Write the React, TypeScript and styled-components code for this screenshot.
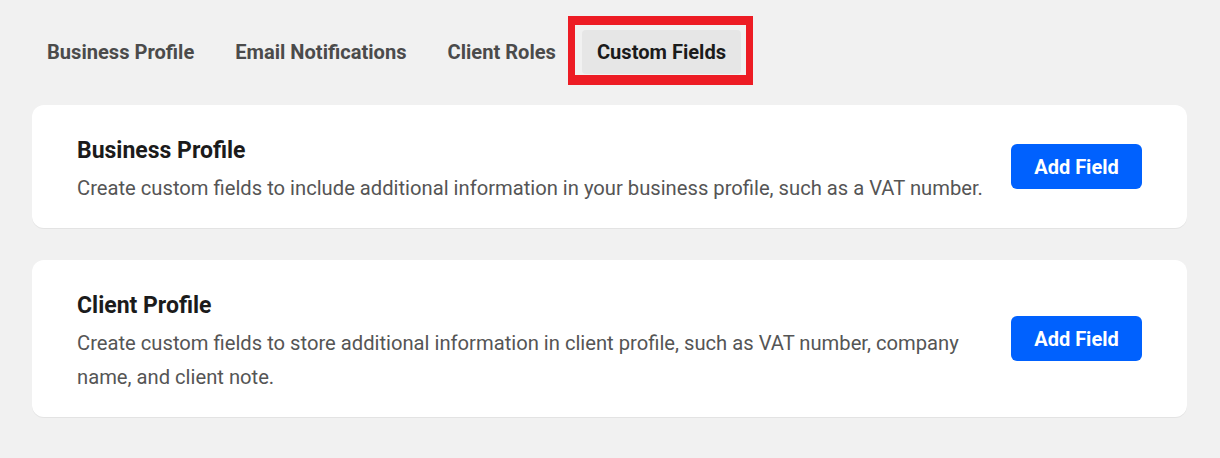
import React from "react";
import styled, { createGlobalStyle } from "styled-components";

const GlobalStyle = createGlobalStyle`
  html, body { margin: 0; padding: 0; background: #f1f1f1; }
  body { font-family: Roboto, "Noto Sans", "Liberation Sans", sans-serif; -webkit-font-smoothing: antialiased; }
  * { box-sizing: border-box; }
`;

const Page = styled.div`
  padding: 30px 33px 40px 32px;
  display: flex;
  flex-direction: column;
`;

const Tabs = styled.nav`
  display: flex;
  gap: 11px;
  margin-bottom: 31px;
`;

const Tab = styled.button<{ $active?: boolean }>`
  position: relative;
  height: 44px;
  padding: 0 15px;
  border: none;
  border-radius: 4px;
  background: ${(p) => (p.$active ? "#e6e6e6" : "transparent")};
  color: ${(p) => (p.$active ? "#1b1b1b" : "#4b4b4b")};
  font-family: Roboto, "Noto Sans", sans-serif;
  font-size: 20.1px;
  font-weight: 700;
  cursor: pointer;
`;

const Highlight = styled.span`
  position: absolute;
  left: -14px;
  right: -12px;
  top: -14px;
  bottom: -11px;
  border: solid #ed1c24;
  border-width: 9px 7px 10px 7px;
  pointer-events: none;
`;

const Cards = styled.div`
  display: flex;
  flex-direction: column;
  gap: 32px;
`;

const Card = styled.section`
  background: #ffffff;
  border-radius: 12px;
  box-shadow: 0 1px 0 #e3e3e3;
  padding: 30px 45px 23px 45px;
  display: flex;
  align-items: center;
  gap: 28px;
`;

const CardBody = styled.div`
  flex: 1;
  min-width: 0;
  display: flex;
  flex-direction: column;
  gap: 6px;
`;

const Title = styled.h2`
  margin: 0;
  font-size: 23px;
  line-height: 31px;
  font-weight: 700;
  color: #1b1b1b;
`;

const Description = styled.p`
  margin: 0;
  margin-top: -1px;
  font-size: 20.2px;
  line-height: 34px;
  color: #555555;
`;

const AddButton = styled.button`
  flex: none;
  width: 131px;
  height: 45px;
  margin-top: -7px;
  border: none;
  border-radius: 6px;
  background: #0061fe;
  color: #ffffff;
  font-family: Roboto, "Noto Sans", sans-serif;
  font-size: 20px;
  font-weight: 700;
  cursor: pointer;
`;

const tabs = ["Business Profile", "Email Notifications", "Client Roles", "Custom Fields"];

const sections = [
  {
    title: "Business Profile",
    text: "Create custom fields to include additional information in your business profile, such as a VAT number.",
  },
  {
    title: "Client Profile",
    text: "Create custom fields to store additional information in client profile, such as VAT number, company name, and client note.",
  },
];

export default function App() {
  return (
    <>
      <GlobalStyle />
      <Page>
        <Tabs>
          {tabs.map((t) => {
            const active = t === "Custom Fields";
            return (
              <Tab key={t} $active={active}>
                {t}
                {active && <Highlight />}
              </Tab>
            );
          })}
        </Tabs>
        <Cards>
          {sections.map((s) => (
            <Card key={s.title}>
              <CardBody>
                <Title>{s.title}</Title>
                <Description>{s.text}</Description>
              </CardBody>
              <AddButton>Add Field</AddButton>
            </Card>
          ))}
        </Cards>
      </Page>
    </>
  );
}
